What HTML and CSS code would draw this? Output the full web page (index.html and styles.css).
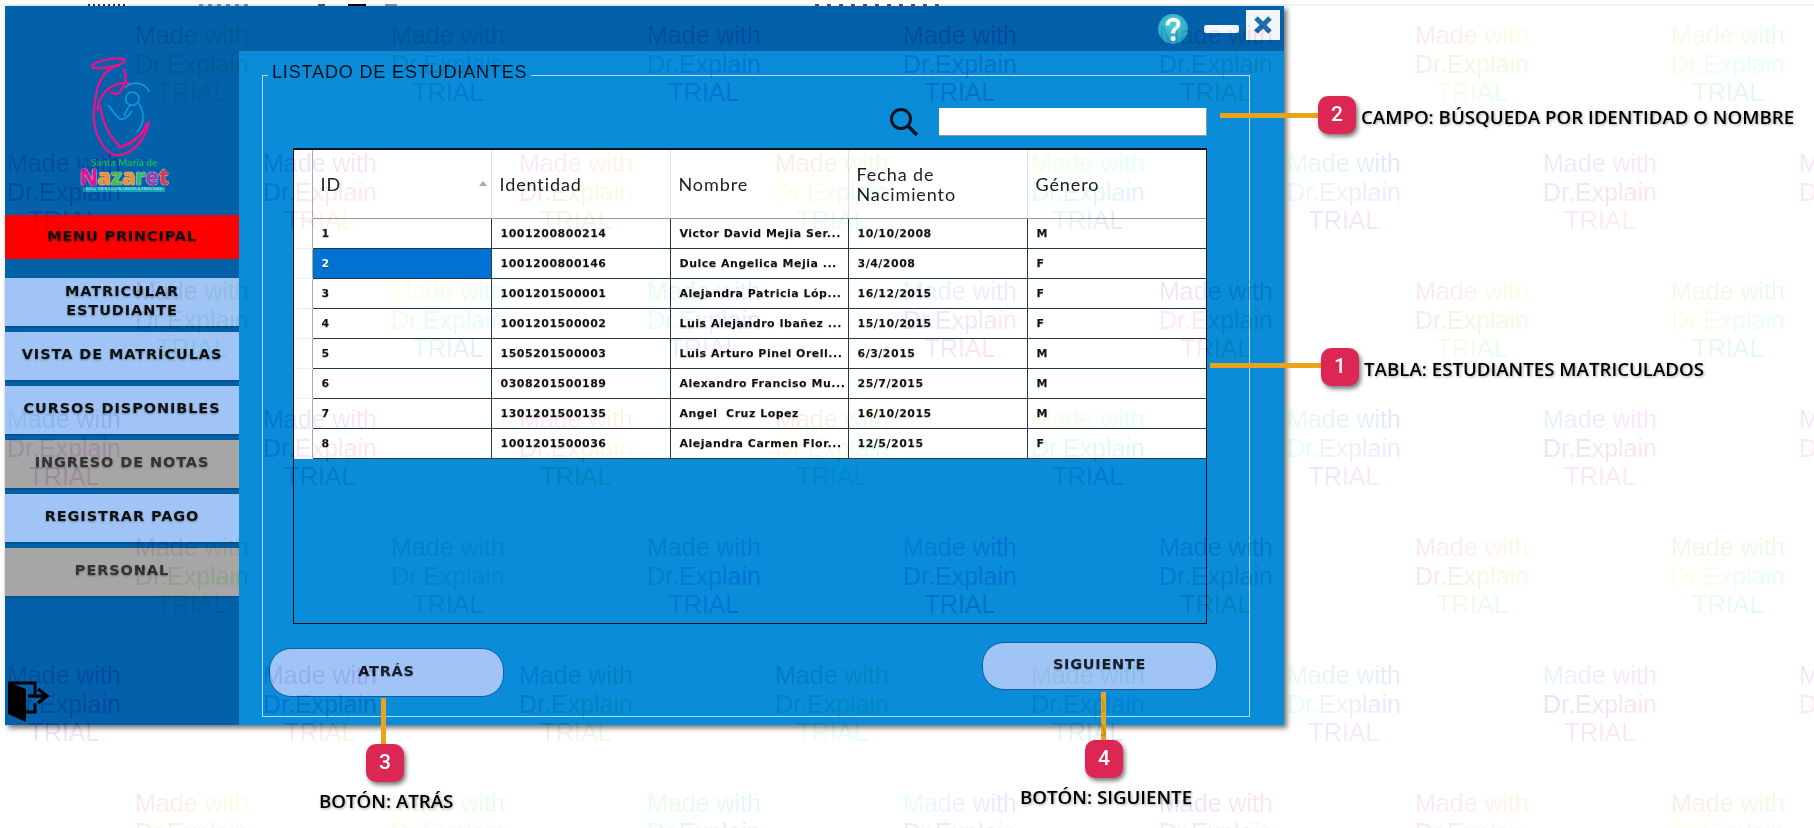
FILE: index.html
```html
<!DOCTYPE html>
<html lang="es">
<head>
    <meta charset="UTF-8">
    <title>Listado de estudiantes</title>
    <link rel="stylesheet" href="styles.css">
</head>
<body>
    <div class="top-strip"></div>
    <div class="app-window">
        <div class="title-bar">
            <svg class="help-icon" width="32" height="32" viewBox="0 0 32 32">
                <defs>
                    <radialGradient id="helpFill" cx="50%" cy="35%" r="70%">
                        <stop offset="0" stop-color="#4fd0d0"/>
                        <stop offset="1" stop-color="#1f9fc4"/>
                    </radialGradient>
                </defs>
                <circle cx="16" cy="16" r="15" fill="url(#helpFill)"/>
                <path d="M10.5 12.5c0-7.5 11-7.5 11-1.5 0 4.500-5.500 4-5.500 9.500" fill="none" stroke="#fff" stroke-width="3.800"/>
                <circle cx="16" cy="25.500" r="2.500" fill="#fff"/>
            </svg>
            <div class="min-btn"></div>
            <div class="close-btn">
                <svg width="20" height="20" viewBox="0 0 20 20"><path d="M3 3l14 14M17 3L3 17" stroke="#1f6cae" stroke-width="5"/></svg>
            </div>
        </div>
        <div class="app-body">
            <aside class="sidebar">
                <div class="logo">
                    <svg width="110" height="110" viewBox="0 0 330 330" fill="none" stroke="#e5148c" stroke-width="7" stroke-linecap="round">
                        <ellipse cx="118" cy="40" rx="50" ry="12" transform="rotate(-10 118 40)"/>
                        <path d="M150 45C112 55 88 90 82 130 76 170 66 200 84 250c12 38 36 66 62 66 40-2 82-40 94-100"/>
                        <path d="M182 100c-30-4-62 6-84 40-8 12-12 26-12 40"/>
                        <path d="M165 58c8 20 8 44-14 70-8 6-18 4-26-2"/>
                        <path d="M94 170c4 40 26 90 56 116"/>
                        <path d="M150 292c28-6 66-28 84-70" stroke-width="9"/>
                        <g stroke="#1494e4" stroke-width="5">
                            <path d="M170 112c10-14 54-22 70 12"/>
                            <circle cx="190" cy="146" r="20"/>
                            <path d="M182 166c-6 10-12 20-16 30"/>
                            <path d="M118 166c12 14 22 32 36 42 12 0 26-10 34-24"/>
                            <path d="M210 160c14 24 20 56-6 86"/>
                        </g>
                    </svg>
                    <div class="logo-top">Santa María de</div>
                    <div class="logo-name"><span class="c1">N</span><span class="c2">a</span><span class="c3">z</span><span class="c4">a</span><span class="c5">r</span><span class="c6">e</span><span class="c7">t</span></div>
                    <div class="logo-sub">EARLY STIMULATION CENTER &amp; PRESCHOOL</div>
                </div>
                <div class="menu-head">MENU PRINCIPAL</div>
                <nav class="menu">
                    <div class="menu-item">MATRICULAR<br>ESTUDIANTE</div>
                    <div class="menu-item">VISTA DE MATRÍCULAS</div>
                    <div class="menu-item">CURSOS DISPONIBLES</div>
                    <div class="menu-item off">INGRESO DE NOTAS</div>
                    <div class="menu-item">REGISTRAR PAGO</div>
                    <div class="menu-item off">PERSONAL</div>
                </nav>
                <svg class="exit-icon" width="42" height="43" viewBox="0 0 42 43">
                    <path d="M1 2l18 7v33L1 34z" fill="#000"/>
                    <path d="M1 3h27v11M28 23v9H19" fill="none" stroke="#000" stroke-width="3"/>
                    <path d="M21 16h17M31 9l9 7-9 7" fill="none" stroke="#000" stroke-width="3.400"/>
                </svg>
            </aside>
            <main class="content">
                <section class="frame">
                    <h2 class="frame-title">LISTADO DE ESTUDIANTES</h2>
                    <div class="search-row">
                        <svg width="30" height="28" viewBox="0 0 30 28" fill="none" stroke="#05121c">
                            <circle cx="12" cy="11" r="9.500" stroke-width="3"/>
                            <path d="M19 18l9 9" stroke-width="3.600"/>
                        </svg>
                        <input class="search-box" type="text">
                    </div>
                    <div class="table-box">
                        <table class="grid">
                            <colgroup>
                                <col class="col-stub"><col class="col-w"><col class="col-w"><col class="col-n"><col class="col-w"><col>
                            </colgroup>
                            <thead>
                                <tr>
                                    <th class="stub"></th>
                                    <th class="id-head">ID<span class="sort"></span></th>
                                    <th>Identidad</th>
                                    <th>Nombre</th>
                                    <th>Fecha de<br>Nacimiento</th>
                                    <th>Género</th>
                                </tr>
                            </thead>
                            <tbody>
                                <tr><td class="stub"></td><td>1</td><td>1001200800214</td><td>Victor David Mejia Ser...</td><td>10/10/2008</td><td>M</td></tr>
                                <tr><td class="stub"></td><td class="picked">2</td><td>1001200800146</td><td>Dulce Angelica Mejia ...</td><td>3/4/2008</td><td>F</td></tr>
                                <tr><td class="stub"></td><td>3</td><td>1001201500001</td><td>Alejandra Patricia Lóp...</td><td>16/12/2015</td><td>F</td></tr>
                                <tr><td class="stub"></td><td>4</td><td>1001201500002</td><td>Luis Alejandro Ibañez ...</td><td>15/10/2015</td><td>F</td></tr>
                                <tr><td class="stub"></td><td>5</td><td>1505201500003</td><td>Luis Arturo Pinel Orell...</td><td>6/3/2015</td><td>M</td></tr>
                                <tr><td class="stub"></td><td>6</td><td>0308201500189</td><td>Alexandro Franciso Mu...</td><td>25/7/2015</td><td>M</td></tr>
                                <tr><td class="stub"></td><td>7</td><td>1301201500135</td><td>Angel  Cruz Lopez</td><td>16/10/2015</td><td>M</td></tr>
                                <tr><td class="stub"></td><td>8</td><td>1001201500036</td><td>Alejandra Carmen Flor...</td><td>12/5/2015</td><td>F</td></tr>
                            </tbody>
                        </table>
                    </div>
                    <div class="actions">
                        <button class="pill back">ATRÁS</button>
                        <button class="pill next">SIGUIENTE</button>
                    </div>
                </section>
            </main>
        </div>
    </div>

    <!-- notas sobre la captura -->
    <div class="line h l2"></div>
    <div class="badge b2">2</div>
    <div class="note n2">CAMPO: BÚSQUEDA POR IDENTIDAD O NOMBRE</div>
    <div class="line h l1"></div>
    <div class="badge b1">1</div>
    <div class="note n1">TABLA: ESTUDIANTES MATRICULADOS</div>
    <div class="line v l3"></div>
    <div class="badge b3">3</div>
    <div class="note n3">BOTÓN: ATRÁS</div>
    <div class="line v l4"></div>
    <div class="badge b4">4</div>
    <div class="note n4">BOTÓN: SIGUIENTE</div>

    <div id="marks"></div>

    <script>
        // marca de agua: filas cada 128px, columnas cada 256px, alternadas
        const marks = document.getElementById('marks');
        let n = 0;
        for (let row = 0; row < 7; row++) {
            for (let col = 0; col < 8; col++) {
                const x = (row % 2 === 0 ? 192 : 64) + col * 256;
                const y = 21 + row * 128;
                const el = document.createElement('div');
                el.className = 'mark';
                el.style.left = (x - 80) + 'px';
                el.style.top = y + 'px';
                el.style.color = `hsl(${(n * 67 + 150) % 360},50%,94%)`;
                ['Made with', 'Dr.Explain', 'TRIAL'].forEach((word, i) => {
                    const line = document.createElement('div');
                    const h = (n * 67 + i * 40) % 360;
                    line.className = 'mark-line';
                    line.textContent = word;
                    line.style.backgroundImage = `linear-gradient(90deg, hsl(${h},100%,95%), hsl(${h + 90},100%,95%))`;
                    el.appendChild(line);
                });
                marks.appendChild(el);
                n++;
            }
        }
    </script>
</body>
</html>
```

FILE: styles.css
```css
html, body {
    margin: 0;
    height: 100%;
    overflow: hidden;
    background-color: #fff;
}
body {
    position: relative;
    font-family: "DejaVu Sans", sans-serif;
}
/* restos de la ventana de atras */
.top-strip {
    height: 2px;
    margin-top: 4px;
    background:
        repeating-linear-gradient(90deg, #333 0 2px, #fff 2px 5px) 88px 0 / 40px 2px no-repeat,
        repeating-linear-gradient(90deg, #889 0 4px, #dde6ee 4px 9px) 199px 0 / 50px 2px no-repeat,
        linear-gradient(#555, #555) 318px 0 / 7px 2px no-repeat,
        linear-gradient(#000, #000) 348px 0 / 18px 2px no-repeat,
        linear-gradient(#8a8f95, #8a8f95) 385px 0 / 12px 2px no-repeat,
        repeating-linear-gradient(90deg, #555 0 4px, #fff 4px 12px) 815px 0 / 125px 2px no-repeat,
        #eef3f7;
}
.app-window {
    width: 1279px;
    height: 719px;
    margin-left: 5px;
    background-color: #0261a9;
    box-shadow: 3px 3px 5px rgba(0,0,0,.55);
    display: flex;
    flex-direction: column;
}
.title-bar {
    height: 45px;
    display: flex;
    justify-content: flex-end;
    align-items: center;
    gap: 14px;
    padding-right: 4px;
    box-sizing: border-box;
}
.min-btn {
    width: 35px;
    height: 8px;
    border-radius: 2px;
    background-color: #f4f8fc;
}
.close-btn {
    width: 34px;
    height: 30px;
    margin-left: -7px;
    margin-top: -8px;
    background-color: #f2f6fb;
    display: flex;
    align-items: center;
    justify-content: center;
}
.help-icon { margin-right: 1px; }
.app-body {
    flex: 1;
    display: flex;
    min-height: 0;
}
.sidebar {
    width: 234px;
    display: flex;
    flex-direction: column;
}
.logo {
    height: 164px;
    display: flex;
    flex-direction: column;
    align-items: center;
    padding-left: 4px;
    box-sizing: border-box;
    line-height: 1;
}
.logo svg { margin-top: -1px; }
.logo-top {
    font-family: "Lato", sans-serif;
    font-weight: bold;
    font-size: 10px;
    color: #21b35c;
    margin-top: -3px;
    height: 9px;
}
.logo-name {
    font-family: "Open Sans", sans-serif;
    font-weight: 800;
    font-size: 22px;
    letter-spacing: -.3px;
    line-height: 20px;
    text-shadow: 0 0 1px #fff, 0 0 1px #fff;
}
.logo-name .c1 { color: #e5148c; }
.logo-name .c2 { color: #f0902c; }
.logo-name .c3 { color: #52b848; }
.logo-name .c4 { color: #f0902c; }
.logo-name .c5 { color: #3fb86a; }
.logo-name .c6 { color: #9c3ea8; }
.logo-name .c7 { color: #e03a50; }
.logo-sub {
    font-size: 3.500px;
    line-height: 5px;
    color: #d8f0f4;
    background-color: #16a3b8;
    margin-top: 1px;
    padding: 0 3px;
    width: 76px;
    white-space: nowrap;
    overflow: hidden;
}
.menu-head {
    height: 44px;
    box-sizing: border-box;
    padding-bottom: 3px;
    background-color: #ff0000;
    display: flex;
    align-items: center;
    justify-content: center;
    font-weight: bold;
    font-size: 14.500px;
    letter-spacing: .8px;
    color: #111;
    text-shadow: 0 1px 2px rgba(0,0,0,.4);
}
.menu {
    margin-top: 19px;
    display: flex;
    flex-direction: column;
    gap: 6px;
}
.menu-item {
    height: 48px;
    box-sizing: border-box;
    padding-bottom: 3px;
    background-color: #a0c4f6;
    display: flex;
    align-items: center;
    justify-content: center;
    text-align: center;
    font-weight: bold;
    font-size: 14.500px;
    line-height: 19px;
    letter-spacing: .9px;
    color: #111;
    text-shadow: 0 1px 2px rgba(0,0,0,.35);
    box-shadow: 0 1px 2px rgba(0,0,0,.25);
}
.menu-item.off {
    background-color: #a6a6a6;
    color: #333;
}
.exit-icon {
    margin-top: auto;
    margin-bottom: 2px;
    margin-left: 2px;
}
.content {
    flex: 1;
    background-color: #0a8cd8;
    padding: 24px 34px 8px 23px;
    display: flex;
}
.frame {
    flex: 1;
    position: relative;
    border: 1px solid #b6d8f0;
    padding: 32px 42px 0 30px;
    display: flex;
    flex-direction: column;
}
.frame-title {
    position: absolute;
    left: 5px;
    top: -14px;
    margin: 0;
    padding: 0 4px;
    background-color: #0a8cd8;
    font-family: "Liberation Sans", sans-serif;
    font-weight: normal;
    font-size: 18px;
    line-height: 20px;
    letter-spacing: .85px;
    color: #05121c;
}
.search-row {
    display: flex;
    justify-content: flex-end;
    align-items: center;
    gap: 20px;
    margin-bottom: 12px;
}
.search-box {
    width: 268px;
    height: 28px;
    box-sizing: border-box;
    border: none;
    border-right: 1px solid #8a9aa6;
    border-bottom: 1px solid #8a9aa6;
    background-color: #fff;
    padding: 0;
}
.table-box {
    height: 476px;
    box-sizing: border-box;
    border: 1px solid #05121c;
    border-top-width: 2px;
}
.grid {
    width: 100%;
    table-layout: fixed;
    border-collapse: collapse;
    background-color: #fff;
}
.col-stub { width: 18px; }
.col-w { width: 179px; }
.col-n { width: 178px; }
.grid th {
    height: 68px;
    padding: 0 0 0 8px;
    text-align: left;
    font-family: "Lato", sans-serif;
    font-weight: normal;
    font-size: 18px;
    line-height: 20px;
    letter-spacing: .9px;
    color: #222;
    border-right: 1px solid #e2e2e2;
    border-bottom: 1px solid #999;
}
.grid td {
    height: 29px;
    padding: 0 0 0 9px;
    font-weight: bold;
    font-size: 11px;
    letter-spacing: .5px;
    color: #111;
    white-space: pre;
    overflow: hidden;
    border-right: 1px solid #24384a;
    border-bottom: 1px solid #24384a;
    text-shadow: 0 1px 1px rgba(0,0,0,.25);
}
.grid td:last-child, .grid th:last-child { border-right: none; }
.grid .stub {
    padding: 0;
    border-right: 1px solid #aaa;
    border-bottom-color: #eee;
}
.grid .picked {
    background-color: #0272d2;
    color: #fff;
}
.id-head { position: relative; }
.sort {
    position: absolute;
    right: 4px;
    top: 31px;
    border-left: 4px solid transparent;
    border-right: 4px solid transparent;
    border-bottom: 5px solid #aaa;
}
.actions {
    display: flex;
    justify-content: space-between;
    margin-left: -24px;
    margin-right: -10px;
    margin-top: 18px;
}
.pill {
    width: 235px;
    height: 49px;
    padding: 0 0 4px;
    border: 1px solid #0a5ea8;
    border-radius: 22px;
    background-color: #a0c4f6;
    font-family: "DejaVu Sans", sans-serif;
    font-weight: bold;
    font-size: 14.500px;
    letter-spacing: .7px;
    color: #1a1f2c;
    text-shadow: 0 1px 1px rgba(0,0,0,.25);
}
.pill.back { margin-top: 6px; }
.pill.next { height: 48px; }

/* notas */
.line {
    position: absolute;
    background-color: #eba31a;
}
.line.h { height: 5px; }
.line.v { width: 5px; }
.l2 { left: 1220px; top: 113px; width: 98px; }
.l1 { left: 1210px; top: 363px; width: 111px; }
.l3 { left: 381px; top: 698px; height: 46px; }
.l4 { left: 1101px; top: 692px; height: 48px; }
.badge {
    position: absolute;
    width: 38px;
    height: 38px;
    border-radius: 10px;
    background-color: #dc2755;
    color: #fff;
    font-family: "Roboto", sans-serif;
    font-weight: 500;
    font-size: 21px;
    line-height: 37px;
    text-align: center;
    box-shadow: 2px 3px 4px rgba(0,0,0,.5);
}
.b2 { left: 1318px; top: 96px; }
.b1 { left: 1321px; top: 348px; }
.b3 { left: 366px; top: 744px; }
.b4 { left: 1085px; top: 740px; }
.note {
    position: absolute;
    font-family: "Open Sans", sans-serif;
    font-weight: 600;
    font-size: 18.700px;
    line-height: 22px;
    color: #000;
    white-space: nowrap;
    text-shadow: 1px 1px 3px rgba(0,0,0,.35);
}
.n2 { left: 1361px; top: 106px; }
.n1 { left: 1364px; top: 358px; }
.n3 { left: 319px; top: 790px; }
.n4 { left: 1020px; top: 786px; }

/* marca de agua */
#marks {
    position: absolute;
    inset: 0;
    overflow: hidden;
    pointer-events: none;
}
.mark {
    position: absolute;
    width: 160px;
    display: flex;
    flex-direction: column;
    align-items: center;
    font-family: "Liberation Sans", sans-serif;
    font-size: 25px;
    line-height: 28.500px;
}
.mark-line {
    color: transparent;
    -webkit-background-clip: text;
    background-clip: text;
    mix-blend-mode: multiply;
}
/* oscurece solo lo que no es blanco */
.mark::after {
    content: "Made with\A Dr.Explain\A TRIAL";
    white-space: pre;
    position: absolute;
    left: 0;
    top: 0;
    width: 100%;
    text-align: center;
    mix-blend-mode: color-burn;
}
```
